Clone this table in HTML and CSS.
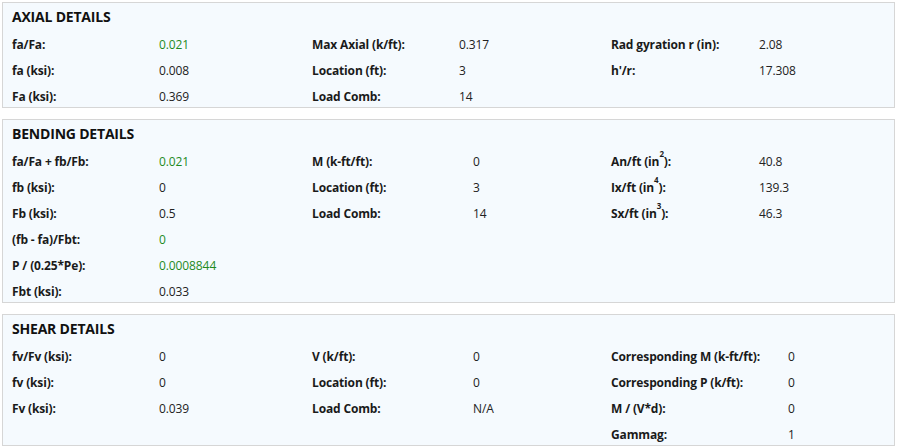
FILE: index.html
```html
<!DOCTYPE html>
<html lang="en">
<head>
<meta charset="utf-8">
<title>Details</title>
<link rel="stylesheet" href="styles.css">
</head>
<body>
<section class="panel axial">
  <h2 class="panel-title">AXIAL DETAILS</h2>
  <div class="panel-body">
    <div class="group g1">
      <span class="lbl">fa/Fa:</span><span class="val ok">0.021</span>
      <span class="lbl">fa (ksi):</span><span class="val">0.008</span>
      <span class="lbl">Fa (ksi):</span><span class="val">0.369</span>
    </div>
    <div class="group g2">
      <span class="lbl">Max Axial (k/ft):</span><span class="val">0.317</span>
      <span class="lbl">Location (ft):</span><span class="val">3</span>
      <span class="lbl">Load Comb:</span><span class="val">14</span>
    </div>
    <div class="group g3">
      <span class="lbl">Rad gyration r (in):</span><span class="val">2.08</span>
      <span class="lbl">h'/r:</span><span class="val">17.308</span>
    </div>
  </div>
</section>

<section class="panel bending">
  <h2 class="panel-title">BENDING DETAILS</h2>
  <div class="panel-body">
    <div class="group g1">
      <span class="lbl">fa/Fa + fb/Fb:</span><span class="val ok">0.021</span>
      <span class="lbl">fb (ksi):</span><span class="val">0</span>
      <span class="lbl">Fb (ksi):</span><span class="val">0.5</span>
      <span class="lbl">(fb - fa)/Fbt:</span><span class="val ok">0</span>
      <span class="lbl">P / (0.25*Pe):</span><span class="val ok">0.0008844</span>
      <span class="lbl">Fbt (ksi):</span><span class="val">0.033</span>
    </div>
    <div class="group g2">
      <span class="lbl">M (k-ft/ft):</span><span class="val">0</span>
      <span class="lbl">Location (ft):</span><span class="val">3</span>
      <span class="lbl">Load Comb:</span><span class="val">14</span>
    </div>
    <div class="group g3">
      <span class="lbl">An/ft (in<sup>2</sup>):</span><span class="val">40.8</span>
      <span class="lbl">Ix/ft (in<sup>4</sup>):</span><span class="val">139.3</span>
      <span class="lbl">Sx/ft (in<sup>3</sup>):</span><span class="val">46.3</span>
    </div>
  </div>
</section>

<section class="panel shear">
  <h2 class="panel-title">SHEAR DETAILS</h2>
  <div class="panel-body">
    <div class="group g1">
      <span class="lbl">fv/Fv (ksi):</span><span class="val">0</span>
      <span class="lbl">fv (ksi):</span><span class="val">0</span>
      <span class="lbl">Fv (ksi):</span><span class="val">0.039</span>
    </div>
    <div class="group g2">
      <span class="lbl">V (k/ft):</span><span class="val">0</span>
      <span class="lbl">Location (ft):</span><span class="val">0</span>
      <span class="lbl">Load Comb:</span><span class="val">N/A</span>
    </div>
    <div class="group g3">
      <span class="lbl">Corresponding M (k-ft/ft):</span><span class="val">0</span>
      <span class="lbl">Corresponding P (k/ft):</span><span class="val">0</span>
      <span class="lbl">M / (V*d):</span><span class="val">0</span>
      <span class="lbl">Gammag:</span><span class="val">1</span>
    </div>
  </div>
</section>
</body>
</html>
```

FILE: styles.css
```css
* { box-sizing: border-box; }

body {
  margin: 2px 4px 0 2px;
  background: #ffffff;
  font-family: "Open Sans", "Noto Sans", Arial, sans-serif;
  font-size: 12px;
  color: #1b1b1b;
}

.panel {
  background: #f5fafe;
  border: 1px solid #d6d6d6;
  padding: 0 9px 0 9px;
  margin-bottom: 11px;
}

.panel-title {
  margin: 0;
  height: 28px;
  line-height: 28px;
  font-size: 14px;
  font-weight: 700;
  color: #111;
  letter-spacing: -0.2px;
}

.panel-body {
  display: grid;
  grid-template-columns: 300px 299px 1fr;
  align-items: start;
  margin-bottom: -2px;
}

.group {
  display: grid;
  grid-auto-rows: 26px;
  align-items: center;
}

.axial .g1, .bending .g1, .shear .g1 { grid-template-columns: 147px 1fr; }
.axial .g2 { grid-template-columns: 147px 1fr; }
.bending .g2, .shear .g2 { grid-template-columns: 161px 1fr; }
.axial .g3, .bending .g3 { grid-template-columns: 148px 1fr; }
.shear .g3 { grid-template-columns: 177px 1fr; }

.lbl {
  font-weight: 700;
  color: #1a1a1a;
  white-space: nowrap;
  letter-spacing: -0.15px;
}

.val {
  color: #222;
  white-space: nowrap;
  letter-spacing: -0.1px;
}

.val.ok { color: #1f8a1f; }

sup {
  font-size: 8px;
  vertical-align: 9px;
  line-height: 0;
  margin-left: 0;
}
```
